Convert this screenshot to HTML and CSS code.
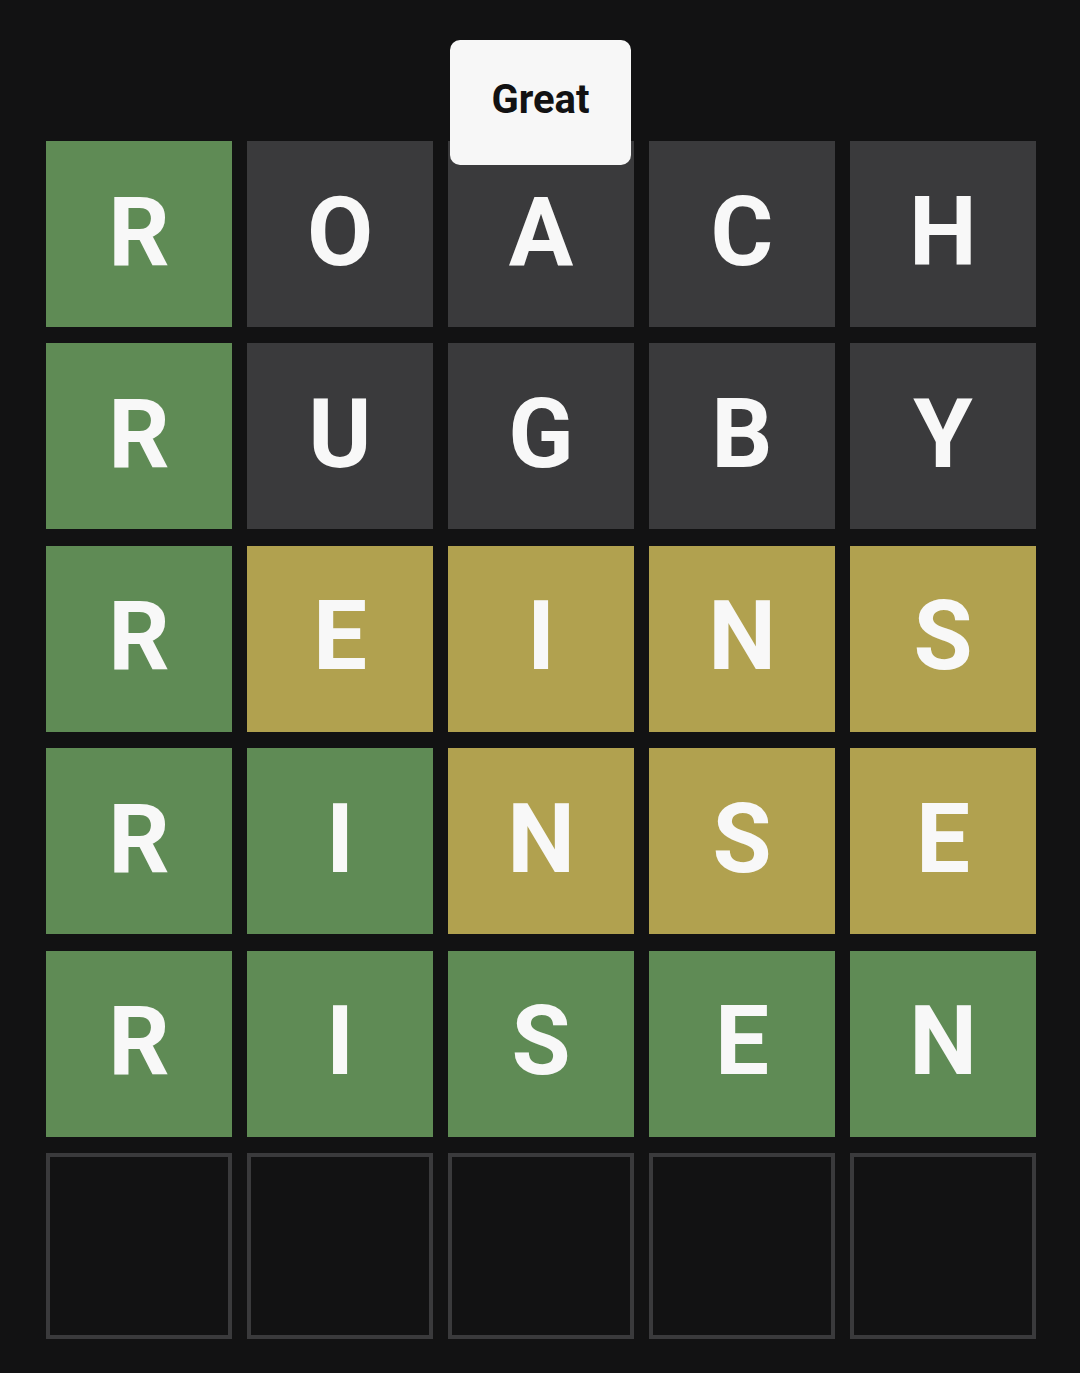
FILE: index.html
```html
<!DOCTYPE html>
<html>
<head>
<meta charset="utf-8">
<link rel="stylesheet" href="styles.css">
</head>
<body>
<div class="page">
  <div class="board">
    <div class="tile correct">R</div><div class="tile absent">O</div><div class="tile absent">A</div><div class="tile absent">C</div><div class="tile absent">H</div>
    <div class="tile correct">R</div><div class="tile absent">U</div><div class="tile absent">G</div><div class="tile absent">B</div><div class="tile absent">Y</div>
    <div class="tile correct">R</div><div class="tile present">E</div><div class="tile present">I</div><div class="tile present">N</div><div class="tile present">S</div>
    <div class="tile correct">R</div><div class="tile correct">I</div><div class="tile present">N</div><div class="tile present">S</div><div class="tile present">E</div>
    <div class="tile correct">R</div><div class="tile correct">I</div><div class="tile correct">S</div><div class="tile correct">E</div><div class="tile correct">N</div>
    <div class="tile empty"></div><div class="tile empty"></div><div class="tile empty"></div><div class="tile empty"></div><div class="tile empty"></div>
  </div>
  <div class="toast">Great</div>
</div>
</body>
</html>
```
FILE: styles.css
```css
html, body {
  margin: 0;
  padding: 0;
  background: #121213;
}
.page {
  position: relative;
  width: 1080px;
  height: 1373px;
  padding: 141px 0 0 46px;
  box-sizing: border-box;
}
.board {
  display: grid;
  grid-template-columns: repeat(5, 186px);
  grid-auto-rows: 186px;
  column-gap: 15px;
  row-gap: 16.4px;
}
.tile {
  display: flex;
  align-items: center;
  justify-content: center;
  box-sizing: border-box;
  padding-bottom: 5px;
  font-family: Roboto, "Liberation Sans", Arial, sans-serif;
  font-weight: 700;
  font-size: 96px;
  line-height: 1;
  color: #f8f8f8;
  text-transform: uppercase;
}
.correct { background: #5f8b55; }
.present { background: #b1a14f; }
.absent { background: #3a3a3c; }
.empty {
  border: 4px solid #3a3a3c;
  background: #121213;
}
.toast {
  position: absolute;
  top: 40px;
  left: 450px;
  width: 181px;
  height: 125px;
  box-sizing: border-box;
  padding-bottom: 6px;
  border-radius: 10px;
  background: #f7f7f7;
  color: #121213;
  display: flex;
  align-items: center;
  justify-content: center;
  font-family: Roboto, "Liberation Sans", Arial, sans-serif;
  font-weight: 700;
  font-size: 40px;
  line-height: 1;
}
```
